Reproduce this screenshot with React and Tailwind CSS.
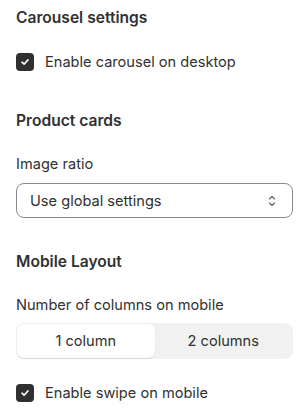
import React from "react";

function Check() {
  return (
    <span className="flex h-[18px] w-[18px] shrink-0 items-center justify-center rounded-[4px] bg-[#303030]">
      <svg width="10" height="10" viewBox="0 0 10 10" fill="none">
        <path d="M2 5.2L4.1 7.2L8 2.9" stroke="white" strokeWidth="1.6" strokeLinecap="round" strokeLinejoin="round" />
      </svg>
    </span>
  );
}

export default function App() {
  return (
    <div className="w-[306px] h-[414px] bg-white pl-4 pr-[13px] pt-2 text-[#303030]" style={{ fontFamily: "Inter, 'Noto Sans', sans-serif" }}>
      <div className="text-[15.6px] leading-5 font-semibold">Carousel settings</div>
      <div className="mt-[25px] flex items-center gap-[11px] h-[18px]">
        <Check />
        <span className="text-[14.6px] leading-5">Enable carousel on desktop</span>
      </div>

      <div className="mt-[40px] text-[15.6px] leading-5 font-semibold">Product cards</div>
      <div className="mt-[23px] text-[14.6px] leading-5">Image ratio</div>
      <div className="mt-[9px] flex h-[35px] items-center justify-between rounded-[8px] border border-[#8a8a8a] pl-[13px] pr-[16px]">
        <span className="text-[14.6px] leading-5">Use global settings</span>
        <svg width="8" height="14" viewBox="0 0 8 14" fill="none">
          <path d="M1.5 5L4 2.5L6.5 5" stroke="#5c5c5c" strokeWidth="1.1" strokeLinecap="round" strokeLinejoin="round" />
          <path d="M1.5 9L4 11.5L6.5 9" stroke="#5c5c5c" strokeWidth="1.1" strokeLinecap="round" strokeLinejoin="round" />
        </svg>
      </div>

      <div className="mt-[34px] text-[15.6px] leading-5 font-semibold">Mobile Layout</div>
      <div className="mt-[23px] text-[14.6px] leading-5">Number of columns on mobile</div>
      <div className="mt-[8px] flex h-[36px] rounded-[8px] bg-[#f1f1f1] p-px">
        <div className="flex flex-1 items-center justify-center rounded-[7px] bg-white text-[14.6px] leading-5 shadow-[0_1px_1px_rgba(0,0,0,0.12)]">1 column</div>
        <div className="flex flex-1 items-center justify-center text-[14.6px] leading-5">2 columns</div>
      </div>

      <div className="mt-[25px] flex items-center gap-[11px] h-[18px]">
        <Check />
        <span className="text-[14.6px] leading-5">Enable swipe on mobile</span>
      </div>
    </div>
  );
}
